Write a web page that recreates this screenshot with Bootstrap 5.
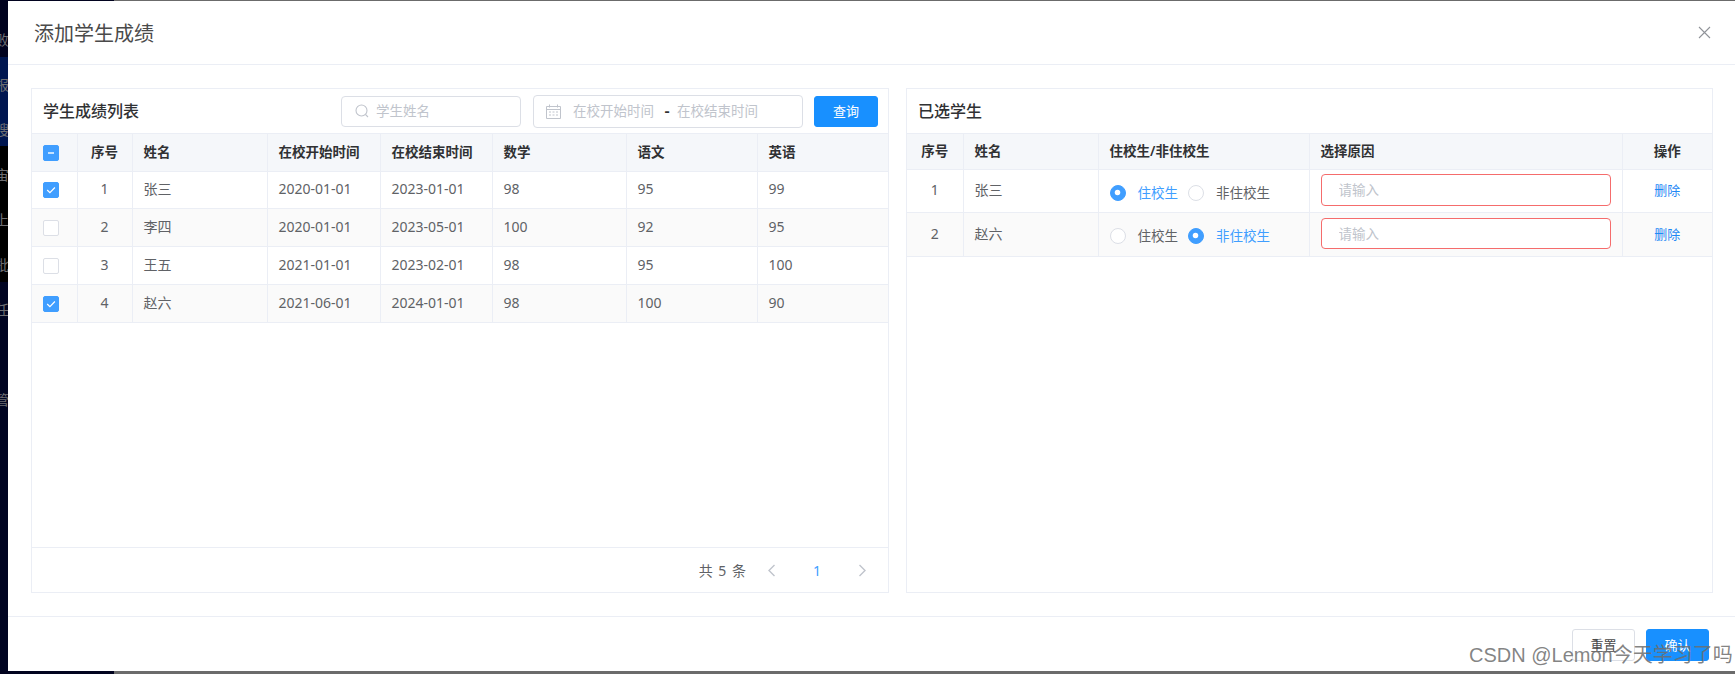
<!DOCTYPE html>
<html lang="zh-CN">
<head>
<meta charset="utf-8">
<title>添加学生成绩</title>
<link href="https://cdn.jsdelivr.net/npm/bootstrap@5.3.0/dist/css/bootstrap.min.css" rel="stylesheet">
<style>
html,body{height:100%;overflow:hidden}
body{font-family:"Noto Sans","Noto Sans CJK SC",sans-serif;font-size:14px;color:#606266;background:#01031f}
.scr-edge{background:linear-gradient(90deg,#01031f 114px,#6b6b6b 114px)}
.edge-top{height:1px}
.edge-bottom{height:3px}
.scr-middle{height:670px}
.scr-strip{width:8px;overflow:hidden;color:#6e6e72;font-size:14px;line-height:45px;padding-top:16px;white-space:nowrap;
 background:linear-gradient(180deg,#01031f 56px,#001650 56px,#001650 145px,#000 145px,#000 281px,#010522 281px)}
.scr-strip div{margin-left:-5px}
.dlg{border-radius:0;border:0;height:100%;background:#fff}
.dlg .modal-header{height:64px;padding:0 24px 0 26px;border-bottom:1px solid #ebeef5}
.dlg .modal-title{font-size:20px;font-weight:400;color:#4a4a4a;line-height:1;margin-top:2px}
.dlg .modal-body{padding:23px 22px 23px 23px;gap:17px;min-height:0}
.dlg .modal-footer{height:55px;padding:12px 26px 0 0;align-items:flex-start;border-top:1px solid #ebeef5;gap:11px}
.dlg .modal-footer>*{margin:0}
.pane{border:1px solid #ebeef5;border-radius:0;min-width:0}
.pane-left{flex:0 0 858px}
.pane-right{flex:0 0 807px}
.pane .card-header{height:44px;padding:0 10px 0 11px;background:#fff;border:0;gap:11px;border-radius:0}
.pane-title{font-size:16px;font-weight:500;color:#303133;margin:1px auto 0 0}
.stu-table{table-layout:fixed;margin:0;border-collapse:collapse;--bs-table-border-color:#ebeef5;--bs-table-color:#606266}
.stu-table th,.stu-table td{padding:0 11px 2px;vertical-align:middle;border:1px solid #ebeef5;font-size:14px;box-shadow:none;color:#606266;line-height:20px}
.stu-table tr>*:first-child{border-left:0}
.stu-table tr>*:last-child{border-right:0}
.stu-table th{background:#f5f7fa;color:#303133;font-size:13.5px;font-weight:600;white-space:nowrap}
.stu-table tbody tr:nth-child(even) td{background:#fafafa}
.t-left thead tr{height:38px}
.t-left tbody tr{height:38px}
.t-left tbody tr:first-child{height:37px}
.t-right thead tr{height:36px}
.t-right tbody tr{height:43px}
.t-right tbody tr:last-child{height:44px}
.c1{width:45px}.c2{width:55px}.c3{width:135px}.c4{width:113px}.c5{width:112px}.c6{width:134px}.c7{width:131px}
.r1{width:56px}.r2{width:135px}.r3{width:211px}.r4{width:313px}.r5{width:90px}
.tick{display:block;width:16px;height:16px;margin-top:2px;border:1px solid #dcdfe6;border-radius:2px;background:#fff}
.tick svg{display:block}
.tick-on{background:#409eff;border-color:#409eff}
.fld{height:31px;border:1px solid #dcdfe6;border-radius:4px;background:#fff;align-items:center}
.fld input{border:0;outline:0;padding:0;background:none;font-size:13.5px;min-width:0;width:100%;color:#606266}
.fld input::placeholder,.rsn::placeholder{color:#c0c4cc;opacity:1}
.fld-search{width:180px;padding-left:13px;gap:7px;margin-right:1px}
.fld-date{width:270px;height:33px;padding-left:12px}
.fld-date input{width:82px;flex:none}
.fld-date svg{margin-right:12px}
.date-dash{color:#303133;width:22px;padding-left:2px;text-align:center;font-size:16px;line-height:1;font-weight:600}
.btn-go{--bs-btn-bg:#1890ff;--bs-btn-border-color:#1890ff;--bs-btn-color:#fff;--bs-btn-hover-bg:#1890ff;--bs-btn-hover-border-color:#1890ff;--bs-btn-hover-color:#fff;width:64px;height:31px;padding:0;font-size:13px;border-radius:3px;line-height:1}
.btn-plain{--bs-btn-bg:#fff;--bs-btn-border-color:#dcdfe6;--bs-btn-color:#4a4a4a;width:63px;height:32px;padding:0;font-size:13px;border-radius:3px;line-height:1}
.btn-go.btn-foot{width:63px;height:32px}
.rdo{gap:0;white-space:nowrap;padding-top:5px}
.rdo .form-check-input{width:16px;height:16px;margin:0 12px 0 0;border-color:#dcdfe6;float:none;flex:none}
.rdo .form-check-input:checked{background-color:#409eff;border-color:#409eff;background-size:80%;background-position:center}
.rdo .form-check-label{font-size:13.5px;margin-right:10px;color:#606266}
.rdo .form-check-input:checked+.form-check-label{color:#409eff}
.rsn{height:32px;border:1px solid #f56c6c;border-radius:4px;padding:0 17px;font-size:13.5px;box-shadow:none}
.rsn:focus{border-color:#f56c6c;box-shadow:none}
.t-right tbody tr:last-child .rsn{height:31px}
.lnk-del{color:#1f88f5;font-size:13px;text-decoration:none}
.pane-foot{height:45px;border-top:1px solid #ebeef5;color:#606266;padding-right:21px}
.pg-total{word-spacing:2px;margin-right:21px}
.pg-num{color:#409eff;width:82px;text-align:center;font-size:14px}
.csdn-mark{position:absolute;left:1469px;top:643px;font-family:"Liberation Sans","Noto Sans CJK SC",sans-serif;font-size:20px;line-height:24px;color:rgba(110,110,110,.85);white-space:nowrap;pointer-events:none}
</style>
</head>
<body class="position-relative">
<div class="scr-edge edge-top"></div>
<div class="d-flex scr-middle">
  <div class="scr-strip flex-shrink-0">
    <div>败</div><div>报</div><div>搜</div><div>宙</div><div>上</div><div>批</div><div>任</div><div>&nbsp;</div><div>管</div>
  </div>
  <div class="modal-content dlg flex-grow-1 d-flex flex-column">
    <div class="modal-header d-flex justify-content-between flex-shrink-0">
      <h5 class="modal-title">添加学生成绩</h5>
      <svg width="13" height="13" viewBox="0 0 13 13" fill="none" stroke="#909399" stroke-width="1.1"><path d="M1 1 12 12M12 1 1 12"/></svg>
    </div>
    <div class="modal-body d-flex flex-grow-1">
      <section class="card pane pane-left">
        <div class="card-header d-flex align-items-center">
          <h6 class="pane-title">学生成绩列表</h6>
          <div class="d-flex fld fld-search">
            <svg width="14" height="14" viewBox="0 0 14 14" fill="none" stroke="#c0c4cc" stroke-width="1.1" class="flex-shrink-0"><circle cx="6.5" cy="6.5" r="5.5"/><path d="m10.5 10.5 2.5 2.5"/></svg>
            <input type="text" placeholder="学生姓名">
          </div>
          <div class="d-flex fld fld-date">
            <svg width="15" height="15" viewBox="0 0 15 15" fill="none" stroke="#c0c4cc" stroke-width="1" class="flex-shrink-0"><path d="M.5 2.5h14v12H.5zM.5 5.5h14M3.5.5v3M11.5.5v3M3 8h2M6.5 8h2M10 8h2M3 11h2M6.5 11h2M10 11h2"/></svg>
            <input type="text" placeholder="在校开始时间">
            <span class="date-dash">-</span>
            <input type="text" placeholder="在校结束时间">
          </div>
          <button type="button" class="btn btn-go">查询</button>
        </div>
        <table class="table stu-table t-left">
          <colgroup><col class="c1"><col class="c2"><col class="c3"><col class="c4"><col class="c5"><col class="c6"><col class="c7"><col></colgroup>
          <thead><tr>
            <th><span class="tick tick-on"><svg width="14" height="14" viewBox="0 0 14 14"><path d="M4 7h6" stroke="#fff" stroke-width="1.4"/></svg></span></th>
            <th class="text-center">序号</th><th>姓名</th><th>在校开始时间</th><th>在校结束时间</th><th>数学</th><th>语文</th><th>英语</th>
          </tr></thead>
          <tbody>
            <tr><td><span class="tick tick-on"><svg width="14" height="14" viewBox="0 0 14 14" fill="none"><path d="m3.2 7 2.7 2.7 5-5.2" stroke="#fff" stroke-width="1.2"/></svg></span></td><td class="text-center">1</td><td>张三</td><td>2020-01-01</td><td>2023-01-01</td><td>98</td><td>95</td><td>99</td></tr>
            <tr><td><span class="tick"></span></td><td class="text-center">2</td><td>李四</td><td>2020-01-01</td><td>2023-05-01</td><td>100</td><td>92</td><td>95</td></tr>
            <tr><td><span class="tick"></span></td><td class="text-center">3</td><td>王五</td><td>2021-01-01</td><td>2023-02-01</td><td>98</td><td>95</td><td>100</td></tr>
            <tr><td><span class="tick tick-on"><svg width="14" height="14" viewBox="0 0 14 14" fill="none"><path d="m3.2 7 2.7 2.7 5-5.2" stroke="#fff" stroke-width="1.2"/></svg></span></td><td class="text-center">4</td><td>赵六</td><td>2021-06-01</td><td>2024-01-01</td><td>98</td><td>100</td><td>90</td></tr>
          </tbody>
        </table>
        <div class="pane-foot d-flex align-items-center justify-content-end mt-auto">
          <span class="pg-total">共 5 条</span>
          <svg width="9" height="13" viewBox="0 0 9 13" fill="none" stroke="#c0c4cc" stroke-width="1.4"><path d="M7.5 1 2 6.5 7.5 12"/></svg>
          <span class="pg-num">1</span>
          <svg width="9" height="13" viewBox="0 0 9 13" fill="none" stroke="#c0c4cc" stroke-width="1.4"><path d="M1.5 1 7 6.5 1.5 12"/></svg>
        </div>
      </section>
      <section class="card pane pane-right">
        <div class="card-header d-flex align-items-center">
          <h6 class="pane-title">已选学生</h6>
        </div>
        <table class="table stu-table t-right">
          <colgroup><col class="r1"><col class="r2"><col class="r3"><col class="r4"><col class="r5"></colgroup>
          <thead><tr><th class="text-center">序号</th><th>姓名</th><th>住校生/非住校生</th><th>选择原因</th><th class="text-center">操作</th></tr></thead>
          <tbody>
            <tr>
              <td class="text-center">1</td><td>张三</td>
              <td><div class="d-flex align-items-center rdo">
                <input class="form-check-input" type="radio" name="stay1" id="s1a" checked><label class="form-check-label" for="s1a">住校生</label>
                <input class="form-check-input" type="radio" name="stay1" id="s1b"><label class="form-check-label" for="s1b">非住校生</label>
              </div></td>
              <td><input type="text" class="form-control rsn" placeholder="请输入"></td>
              <td class="text-center"><a href="#" class="lnk-del">删除</a></td>
            </tr>
            <tr>
              <td class="text-center">2</td><td>赵六</td>
              <td><div class="d-flex align-items-center rdo">
                <input class="form-check-input" type="radio" name="stay2" id="s2a"><label class="form-check-label" for="s2a">住校生</label>
                <input class="form-check-input" type="radio" name="stay2" id="s2b" checked><label class="form-check-label" for="s2b">非住校生</label>
              </div></td>
              <td><input type="text" class="form-control rsn" placeholder="请输入"></td>
              <td class="text-center"><a href="#" class="lnk-del">删除</a></td>
            </tr>
          </tbody>
        </table>
      </section>
    </div>
    <div class="modal-footer flex-shrink-0">
      <button type="button" class="btn btn-plain">重置</button>
      <button type="button" class="btn btn-go btn-foot">确认</button>
    </div>
  </div>
</div>
<div class="scr-edge edge-bottom"></div>
<div class="csdn-mark">CSDN @Lemon今天学习了吗</div>
<script src="https://cdn.jsdelivr.net/npm/bootstrap@5.3.0/dist/js/bootstrap.bundle.min.js"></script>
</body>
</html>
